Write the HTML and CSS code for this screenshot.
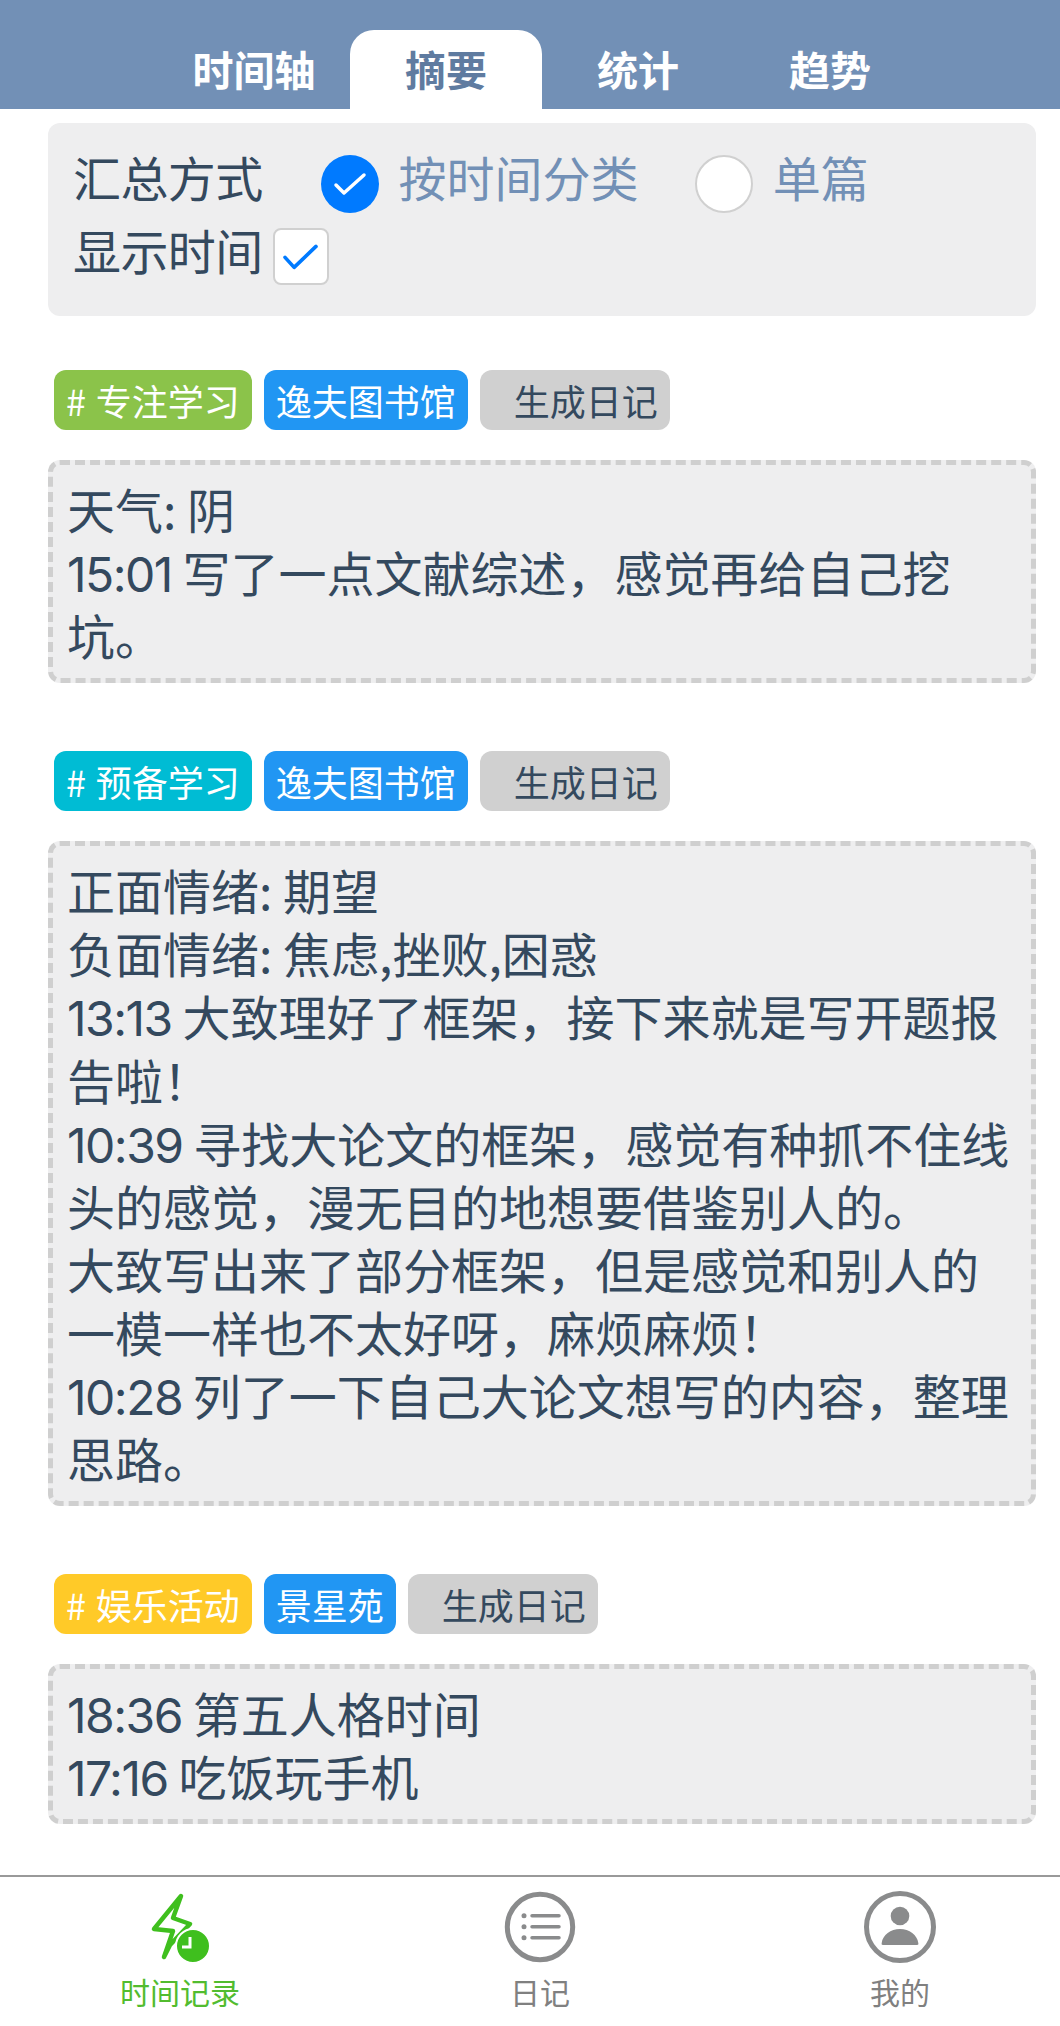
FILE: index.html
```html
<!DOCTYPE html>
<html lang="zh-CN">
<head>
<meta charset="utf-8">
<title>摘要</title>
<link rel="stylesheet" href="styles.css">
</head>
<body>
<div class="page">
  <header class="tabs">
    <span class="tab">时间轴</span>
    <span class="tab tab-active">摘要</span>
    <span class="tab">统计</span>
    <span class="tab">趋势</span>
  </header>
  <main class="content">
    <section class="options">
      <div class="opt-row">
        <span class="opt-label">汇总方式</span>
        <span class="radio radio-on"><svg viewBox="0 0 58 58" class="radio-check"><path d="M15 30l8 8 20-18"/></svg></span>
        <span class="radio-text">按时间分类</span>
        <span class="radio radio-off"></span>
        <span class="radio-text">单篇</span>
      </div>
      <div class="opt-row opt-row-2">
        <span class="opt-label">显示时间</span>
        <span class="checkbox"><svg viewBox="0 0 56 57" class="box-check"><path d="M11 30l10 11 24-23"/></svg></span>
      </div>
    </section>

    <div class="tags">
      <span class="tag tag-green"># 专注学习</span>
      <span class="tag tag-blue">逸夫图书馆</span>
      <span class="tag tag-gray">生成日记</span>
    </div>
    <div class="note">天气: 阴<br><span class="t">15:01</span> 写了一点文献综述，感觉再给自己挖坑。</div>

    <div class="tags">
      <span class="tag tag-cyan"># 预备学习</span>
      <span class="tag tag-blue">逸夫图书馆</span>
      <span class="tag tag-gray">生成日记</span>
    </div>
    <div class="note">正面情绪: 期望<br>负面情绪: 焦虑,挫败,困惑<br><span class="t">13:13</span> 大致理好了框架，接下来就是写开题报告啦！<br><span class="t">10:39</span> 寻找大论文的框架，感觉有种抓不住线头的感觉，漫无目的地想要借鉴别人的。<br>大致写出来了部分框架，但是感觉和别人的一模一样也不太好呀，麻烦麻烦！<br><span class="t">10:28</span> 列了一下自己大论文想写的内容，整理思路。</div>

    <div class="tags">
      <span class="tag tag-yellow"># 娱乐活动</span>
      <span class="tag tag-blue">景星苑</span>
      <span class="tag tag-gray">生成日记</span>
    </div>
    <div class="note"><span class="t">18:36</span> 第五人格时间<br><span class="t">17:16</span> 吃饭玩手机</div>
  </main>
  <nav class="bottom">
    <div class="nav-item nav-on">
      <svg class="nav-icon" viewBox="0 0 80 80">
        <path class="bolt" d="M41 11 L14 44 L33 46 L24 72 L30 60 L50 39 L33 33 Z"/>
        <circle class="clock" cx="53" cy="61" r="17"/>
        <path class="hands" d="M50 52 V62 H42"/>
      </svg>
      <span>时间记录</span>
    </div>
    <div class="nav-item">
      <svg class="nav-icon" viewBox="0 0 80 80">
        <circle class="ring" cx="40" cy="42" r="32.7"/>
        <circle class="dot" cx="24" cy="30.7" r="2.5"/>
        <circle class="dot" cx="24" cy="41.7" r="2.5"/>
        <circle class="dot" cx="24" cy="52.7" r="2.5"/>
        <path class="lines" d="M32 30.7H59M32 41.7H59M32 52.7H59"/>
      </svg>
      <span>日记</span>
    </div>
    <div class="nav-item">
      <svg class="nav-icon" viewBox="0 0 80 80">
        <circle class="ring" cx="40" cy="42" r="33.5"/>
        <circle class="dot" cx="40" cy="31" r="9.3"/>
        <path class="dot" d="M23 60c-1.500 0-1.500-1-1.300-2 1-8 9-14 18.300-14s17.300 6 18.300 14c.2 1 .2 2-1.300 2z"/>
      </svg>
      <span>我的</span>
    </div>
  </nav>
</div>
</body>
</html>
```
FILE: styles.css
```css
* { box-sizing: border-box; }
html, body { margin: 0; padding: 0; background: #fff; }
body { font-family: "Noto Sans CJK SC", "Noto Sans", sans-serif; color: #34495e; }
.page { width: 1060px; height: 2026px; display: flex; flex-direction: column; overflow: hidden; }

.tabs { height: 109px; background: #7290b6; display: flex; align-items: flex-end; padding-left: 158px; flex-shrink: 0; }
.tab { width: 192px; height: 79px; display: flex; align-items: center; justify-content: center; color: #fff; font-size: 41px; font-weight: 700; border-radius: 24px 24px 0 0; padding-bottom: 4px; }
.tab-active { background: #fff; color: #5f7ba0; }

.content { flex: 1; min-height: 0; padding: 14px 24px 0 48px; }
.options { background: #eeeeef; border-radius: 12px; height: 193px; padding: 22px 25px 0; margin-bottom: 54px; }
.opt-row { display: flex; align-items: center; height: 62px; font-size: 48px; }
.opt-row-2 { margin-top: 11px; }
.opt-label { margin-right: 10px; line-height: 62px; letter-spacing: -0.6px; }
.radio { width: 58px; height: 58px; border-radius: 50%; display: inline-flex; flex-shrink: 0; margin-top: 16px; }
.radio-on { background: #007aff; margin-left: 48px; }
.radio-off { background: #fff; border: 2px solid #d0d0d0; margin-left: 56px; }
.radio-check { width: 58px; height: 58px; fill: none; stroke: #fff; stroke-width: 3.5; stroke-linecap: round; stroke-linejoin: round; }
.radio-text { color: #7290b6; margin-left: 20px; }
.checkbox { width: 56px; height: 57px; background: #fff; border: 2.5px solid #d0d0d0; border-radius: 8px; display: inline-flex; margin-top: 15px; flex-shrink: 0; }
.box-check { width: 51px; height: 52px; fill: none; stroke: #007aff; stroke-width: 4; stroke-linecap: round; stroke-linejoin: round; }

.tags { display: flex; gap: 12px; height: 60px; margin: 0 0 30px 6px; }
.tag { height: 60px; border-radius: 12px; padding: 0 12px; font-size: 36px; line-height: 60px; color: #fff; }
.tag-green { background: #8bc34a; word-spacing: 1.6px; }
.tag-cyan { background: #00bcd4; word-spacing: 1.6px; }
.tag-yellow { background: #ffca28; word-spacing: 1.6px; }
.tag-blue { background: #2196f3; }
.tag-gray { background: #d0d0d0; color: #34495e; padding-left: 34px; }

.note { background: #eeeeef; border: 5px dashed #cfcfcf; border-radius: 12px; padding: 12px 14px; font-size: 48px; line-height: 63.1px; margin-bottom: 68px; }
.t { font-family: "Inter", "Noto Sans", sans-serif; letter-spacing: -1.5px; line-height: 1; }

.bottom { height: 151px; flex-shrink: 0; border-top: 2px solid #999; display: grid; grid-template-columns: repeat(3, 240px); justify-content: space-between; padding: 0 40px 0 60px; background: #fff; }
.nav-item { display: flex; flex-direction: column; align-items: center; font-size: 30px; line-height: 36px; color: #808080; padding-top: 8px; }
.nav-on { color: #52bc2f; }
.nav-icon { width: 80px; height: 80px; display: block; margin-bottom: 8px; }
.bolt { fill: none; stroke: #3fbf1e; stroke-width: 4.5; stroke-linejoin: round; stroke-linecap: round; }
.clock { fill: #3fbf1e; stroke: #fff; stroke-width: 2; }
.hands { fill: none; stroke: #fff; stroke-width: 3; }
.ring { fill: none; stroke: #8a8b8c; stroke-width: 5; }
.dot { fill: #8a8b8c; }
.lines { fill: none; stroke: #8a8b8c; stroke-width: 3.5; stroke-linecap: round; }
```
